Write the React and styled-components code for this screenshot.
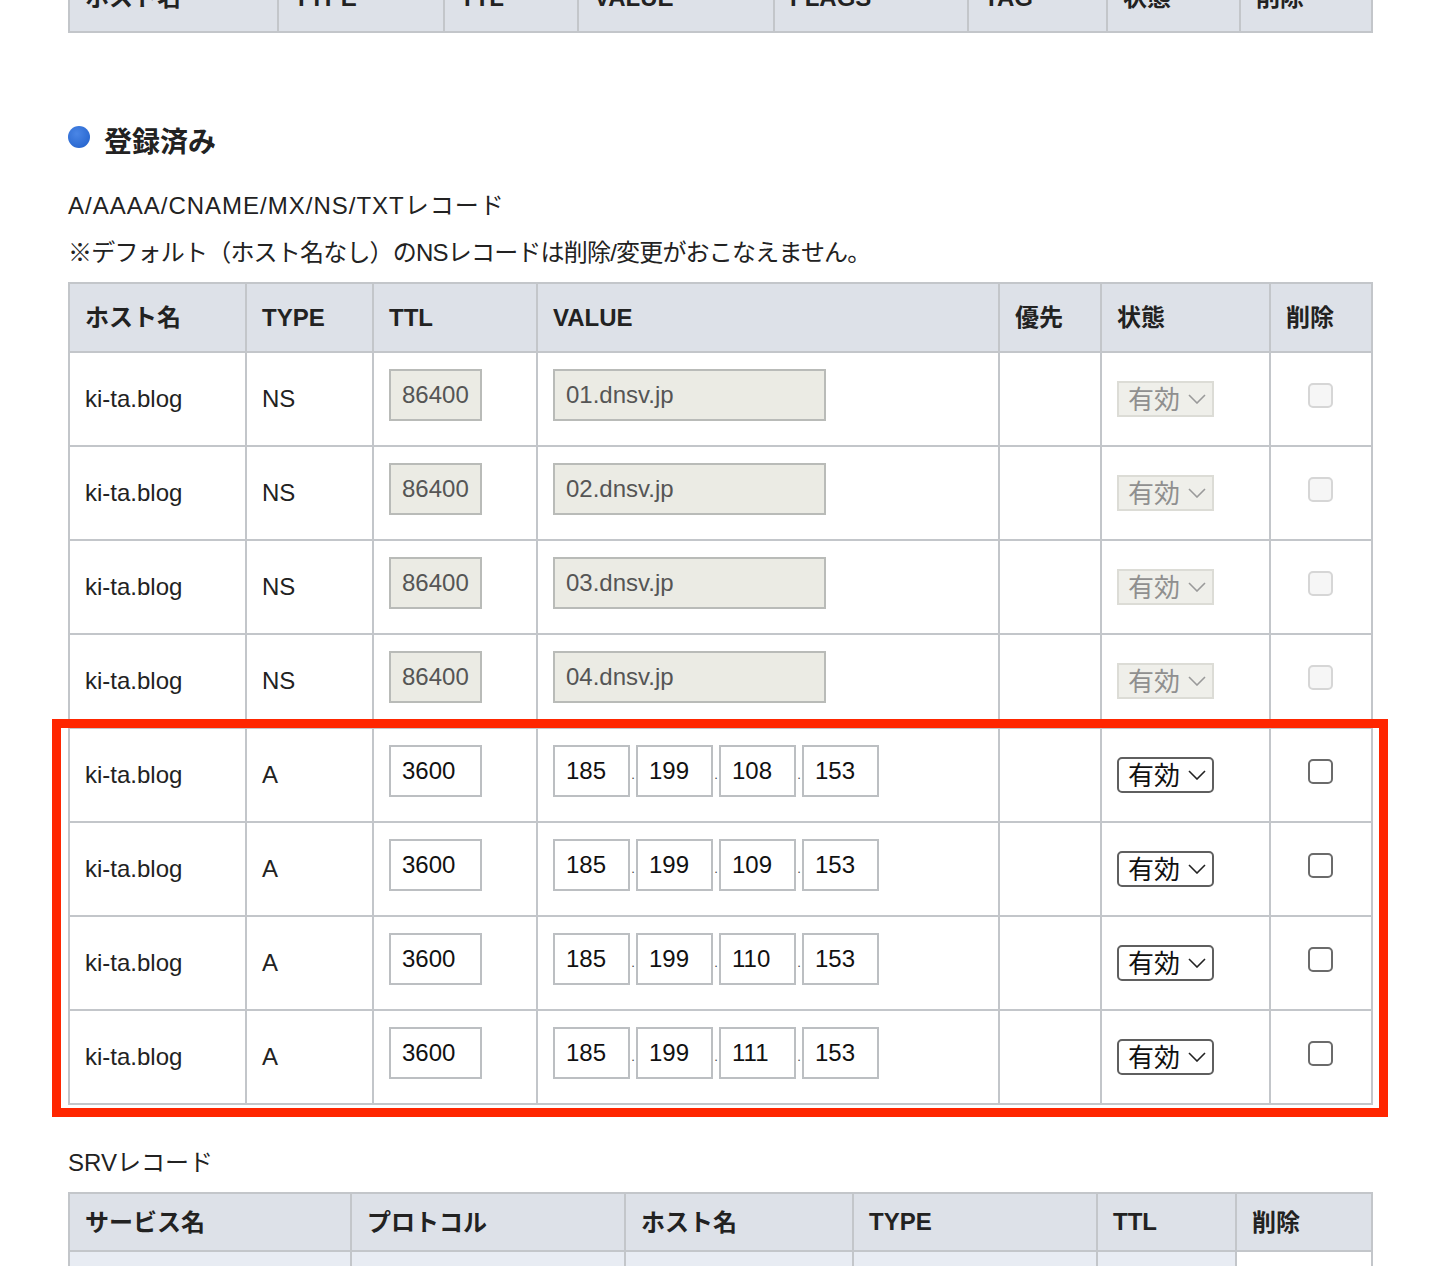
import React from 'react';
import styled, { createGlobalStyle } from 'styled-components';

const GlobalStyle = createGlobalStyle`
  html, body {
    margin: 0;
    padding: 0;
    background: #fff;
  }
  body {
    font-family: "Liberation Sans", "Noto Sans CJK JP", sans-serif;
    color: #222;
  }
`;

const Viewport = styled.div`
  height: 100vh;
  overflow: hidden;
`;

const Page = styled.div`
  width: 1303px;
  padding: 0 61px 0 68px;
  margin-top: -38px;
`;

const Table = styled.table`
  width: 100%;
  table-layout: fixed;
  border-collapse: collapse;
  border: 2px solid #c3c6ca;
`;

const HeadCell = styled.th`
  background: #dde1e8;
  border: 2px solid #c3c6ca;
  height: ${(p) => p.$h}px;
  padding: 0 0 ${(p) => (p.$jp ? 4 : 0)}px 15px;
  text-align: left;
  font-size: 24px;
  font-weight: bold;
  color: #222;
  box-sizing: border-box;
`;

const Cell = styled.td`
  border: 2px solid #c3c6ca;
  height: ${(p) => p.$h || 94}px;
  padding: 0 15px;
  font-size: 24px;
  color: #222;
  vertical-align: middle;
  text-align: ${(p) => (p.$center ? 'center' : 'left')};
  background: ${(p) => p.$bg || '#fff'};
  box-sizing: border-box;
`;

const SectionTitle = styled.h2`
  display: flex;
  align-items: center;
  gap: 14px;
  margin: 90px 0 25px;
  height: 34px;
  font-size: 28px;
  font-weight: bold;
  color: #222;
`;

const Dot = styled.span`
  width: 22px;
  height: 22px;
  border-radius: 50%;
  margin-top: -6px;
  background: radial-gradient(circle at 40% 35%, #4a86e6, #1f5ec9);
`;

const Note = styled.p`
  margin: 0;
  font-size: 24px;
  line-height: 47px;
  letter-spacing: ${(p) => p.$spacing || 0}px;
  color: #222;
`;

const TableWrap = styled.div`
  position: relative;
  margin-top: 6px;
`;

const Highlight = styled.div`
  position: absolute;
  top: 437px;
  left: -16px;
  right: -17px;
  bottom: -12px;
  border: 9px solid #ff2600;
  pointer-events: none;
`;

const TextInput = styled.input`
  box-sizing: border-box;
  width: ${(p) => p.$w}px;
  height: 52px;
  padding: 0 0 0 11px;
  margin: 0 0 8px;
  border: 2px solid ${(p) => (p.$locked ? '#b9bbb8' : '#bcbfc2')};
  border-radius: 0;
  background: ${(p) => (p.$locked ? '#ebebe4' : '#fff')};
  color: ${(p) => (p.$locked ? '#555' : '#111')};
  font: 24px "Liberation Sans", sans-serif;
  vertical-align: middle;
  outline: none;
`;

const IpGroup = styled.div`
  display: inline-flex;
  align-items: baseline;
  margin-bottom: 8px;
  vertical-align: middle;
`;

const IpDot = styled.span`
  width: 6px;
  text-align: center;
  font-size: 13px;
  color: #444;
`;

const SelectBox = styled.div`
  display: inline-flex;
  align-items: center;
  box-sizing: border-box;
  width: 97px;
  height: 36px;
  padding: 0 0 4px 9px;
  border: 2px solid ${(p) => (p.$locked ? '#dcdcd6' : '#5f5f5f')};
  border-radius: ${(p) => (p.$locked ? 0 : 5)}px;
  background: ${(p) => (p.$locked ? '#efefea' : '#fff')};
  color: ${(p) => (p.$locked ? '#8f8f8f' : '#111')};
  font-size: 26px;
  vertical-align: middle;

  svg {
    margin: 4px 0 0 8px;
  }
`;

const Check = styled.input`
  appearance: none;
  box-sizing: border-box;
  width: 25px;
  height: 25px;
  margin: 0 2px 8px 0;
  border: 2px solid ${(p) => (p.$locked ? '#d6d6d6' : '#6b6b6b')};
  border-radius: 5px;
  background: ${(p) => (p.$locked ? '#f6f6f6' : '#fff')};
  vertical-align: middle;
`;

const SubLabel = styled.p`
  margin: 34px 0 6px;
  font-size: 24px;
  line-height: 47px;
  color: #222;
`;

const Chevron = ({ color }) => (
  <svg width="18" height="10" viewBox="0 0 18 10">
    <polyline points="1,1 9,9 17,1" fill="none" stroke={color} strokeWidth="1.6" />
  </svg>
);

const Status = ({ locked }) => (
  <SelectBox $locked={locked}>
    有効
    <Chevron color={locked ? '#9a9a9a' : '#222'} />
  </SelectBox>
);

const isJp = (s) => /[^\x00-\x7F]/.test(s);

const topCols = [209, 166, 134, 196, 194, 139, 133, 132];
const topHeads = ['ホスト名', 'TYPE', 'TTL', 'VALUE', 'FLAGS', 'TAG', '状態', '削除'];

const mainCols = [177, 127, 164, 462, 102, 169, 102];
const mainHeads = ['ホスト名', 'TYPE', 'TTL', 'VALUE', '優先', '状態', '削除'];

const srvCols = [282, 274, 228, 244, 139, 136];
const srvHeads = ['サービス名', 'プロトコル', 'ホスト名', 'TYPE', 'TTL', '削除'];

const records = [
  { type: 'NS', ttl: '86400', value: '01.dnsv.jp', locked: true },
  { type: 'NS', ttl: '86400', value: '02.dnsv.jp', locked: true },
  { type: 'NS', ttl: '86400', value: '03.dnsv.jp', locked: true },
  { type: 'NS', ttl: '86400', value: '04.dnsv.jp', locked: true },
  { type: 'A', ttl: '3600', ip: ['185', '199', '108', '153'] },
  { type: 'A', ttl: '3600', ip: ['185', '199', '109', '153'] },
  { type: 'A', ttl: '3600', ip: ['185', '199', '110', '153'] },
  { type: 'A', ttl: '3600', ip: ['185', '199', '111', '153'] },
];

const Cols = ({ widths }) => (
  <colgroup>
    {widths.map((w, i) => (
      <col key={i} style={{ width: w }} />
    ))}
  </colgroup>
);

const HeadRow = ({ heads, h }) => (
  <tr>
    {heads.map((t) => (
      <HeadCell key={t} $h={h} $jp={isJp(t)}>{t}</HeadCell>
    ))}
  </tr>
);

const App = () => (
  <Viewport>
    <GlobalStyle />
    <Page>
      <Table>
        <Cols widths={topCols} />
        <thead>
          <HeadRow heads={topHeads} h={69} />
        </thead>
      </Table>

      <SectionTitle>
        <Dot />
        登録済み
      </SectionTitle>
      <Note $spacing={1}>A/AAAA/CNAME/MX/NS/TXTレコード</Note>
      <Note $spacing={-0.8}>※デフォルト（ホスト名なし）のNSレコードは削除/変更がおこなえません。</Note>

      <TableWrap>
        <Table>
          <Cols widths={mainCols} />
          <thead>
            <HeadRow heads={mainHeads} h={69} />
          </thead>
          <tbody>
            {records.map((r, i) => (
              <tr key={i}>
                <Cell>ki-ta.blog</Cell>
                <Cell>{r.type}</Cell>
                <Cell>
                  <TextInput $w={93} $locked={r.locked} value={r.ttl} readOnly />
                </Cell>
                <Cell>
                  {r.ip ? (
                    <IpGroup>
                      {r.ip.map((o, j) => (
                        <React.Fragment key={j}>
                          {j > 0 && <IpDot>.</IpDot>}
                          <TextInput $w={77} value={o} readOnly style={{ marginBottom: 0 }} />
                        </React.Fragment>
                      ))}
                    </IpGroup>
                  ) : (
                    <TextInput $w={273} $locked value={r.value} readOnly />
                  )}
                </Cell>
                <Cell />
                <Cell>
                  <Status locked={r.locked} />
                </Cell>
                <Cell $center>
                  <Check type="checkbox" $locked={r.locked} readOnly />
                </Cell>
              </tr>
            ))}
          </tbody>
        </Table>
        <Highlight />
      </TableWrap>

      <SubLabel>SRVレコード</SubLabel>
      <Table>
        <Cols widths={srvCols} />
        <thead>
          <HeadRow heads={srvHeads} h={58} />
        </thead>
        <tbody>
          <tr>
            {srvHeads.map((h, i) => (
              <Cell key={h} $h={60} $bg={i < 5 ? '#e8ecf3' : '#fff'} />
            ))}
          </tr>
        </tbody>
      </Table>
    </Page>
  </Viewport>
);

export default App;
